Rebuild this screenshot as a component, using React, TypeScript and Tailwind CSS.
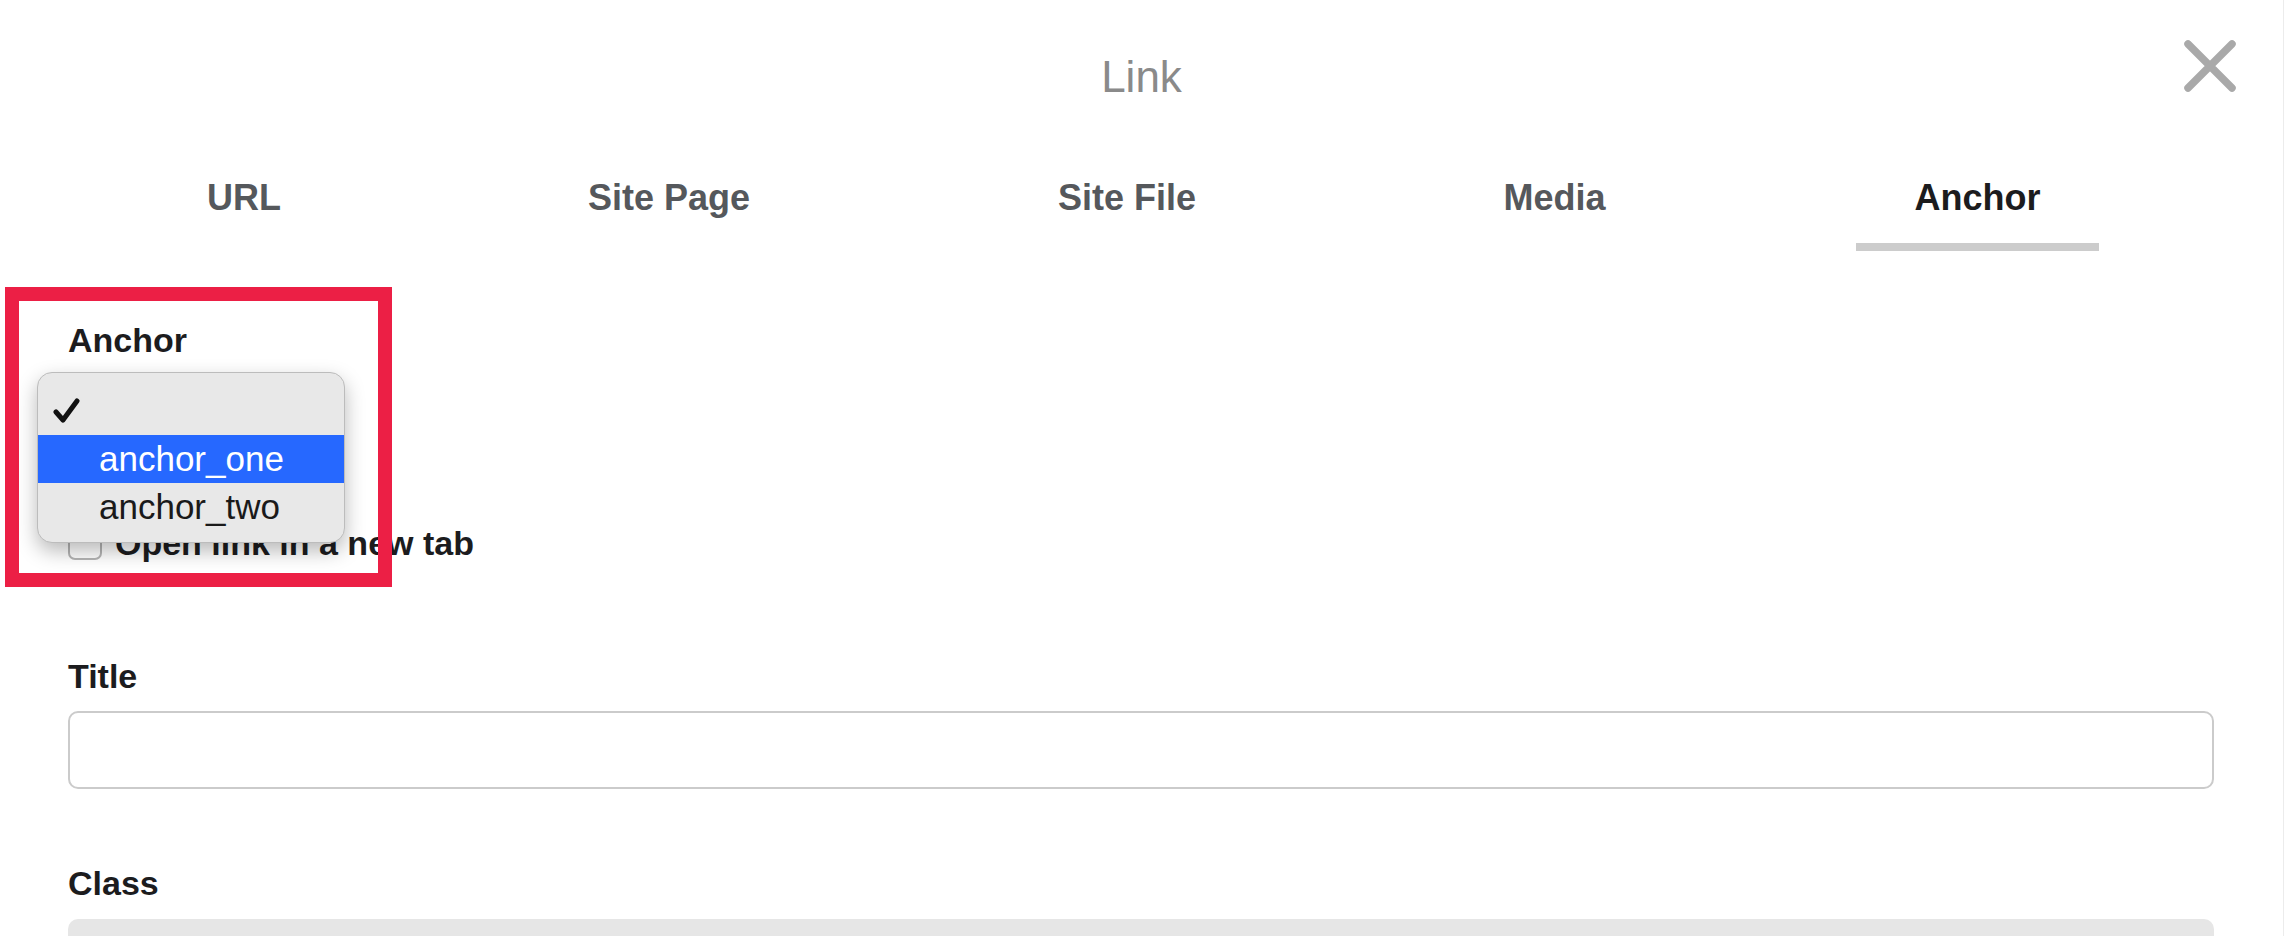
import React from 'react';

const tabs = [
    { label: 'URL', width: 'w-[186px]' },
    { label: 'Site Page', width: 'w-[278px]' },
    { label: 'Site File', width: 'w-[252px]' },
    { label: 'Media', width: 'w-[217px]' },
    { label: 'Anchor', width: 'w-[243px]', active: true },
];

const CloseIcon: React.FC = () => (
    <svg width="54" height="54" viewBox="0 0 54 54" fill="none">
        <path d="M5 5 L49 49 M49 5 L5 49" stroke="#a9a9a9" strokeWidth="7.5" strokeLinecap="round" />
    </svg>
);

const AnchorMenu: React.FC = () => (
    <div className="absolute left-[-31px] top-[15px] z-20 w-[308px] h-[171px] pt-[14px] rounded-[15px] bg-[#e8e8e8] border border-[#bcbcbc] shadow-[0_8px_20px_rgba(0,0,0,0.28)] text-[35px] leading-[48px] font-['Liberation_Sans',Arial,sans-serif]">
        <div className="h-[48px] flex items-center pl-[15px]">
            <svg width="28" height="26" viewBox="0 0 28 26" fill="none">
                <path d="M3 14 L10 22 L24 3" stroke="#111" strokeWidth="5" strokeLinecap="round" strokeLinejoin="round" />
            </svg>
        </div>
        <div className="h-[48px] pl-[61px] bg-[#2668ff] text-white">anchor_one</div>
        <div className="h-[48px] pl-[61px] text-[#1a1a1a]">anchor_two</div>
    </div>
);

export default function App() {
    return (
        <div className="relative w-[2284px] h-[936px] overflow-hidden bg-white border-r border-[#ececec] font-['Liberation_Sans',Arial,sans-serif]">
            {/* Header */}
            <div className="pt-[55px] text-center text-[44px] leading-[44px] text-[#8a8a8a]">Link</div>
            <button className="absolute right-[46px] top-[39px]">
                <CloseIcon />
            </button>

            {/* Tabs */}
            <div className="mt-[81px] flex pl-[151px] gap-[193px]">
                {tabs.map((t) => (
                    <div
                        key={t.label}
                        className={`${t.width} text-center text-[36px] leading-[36px] font-bold pb-[27px] border-b-[8px] ${
                            t.active ? 'border-[#cccccc] text-[#1c1c1e]' : 'border-transparent text-[#55585c]'
                        }`}
                    >
                        {t.label}
                    </div>
                ))}
            </div>

            {/* Form */}
            <div className="pl-[68px] pr-[69px] text-[#1c1c1e]">
                <div className="mt-[72px] h-[34px] text-[34px] leading-[34px] font-bold">Anchor</div>
                <div className="relative h-[169px]">
                    <AnchorMenu />
                </div>
                <div className="flex items-center gap-[13px] h-[34px]">
                    <div className="w-[34px] h-[34px] rounded-[7px] border-2 border-[#b5b5b5] bg-white" />
                    <span className="text-[34px] leading-[34px] font-bold">Open link in a new tab</span>
                </div>

                <div className="mt-[99px] h-[34px] text-[34px] leading-[34px] font-bold">Title</div>
                <div className="mt-[18px] h-[78px] rounded-[10px] border-2 border-[#cbcbcb] bg-white" />

                <div className="mt-[77px] h-[34px] text-[34px] leading-[34px] font-bold">Class</div>
                <div className="mt-[19px] h-[78px] rounded-[10px] bg-[#e6e6e6]" />
            </div>

            {/* Highlight annotation */}
            <div className="absolute left-[5px] top-[287px] z-10 w-[387px] h-[300px] border-[14px] border-[#ec1f45] pointer-events-none" />
        </div>
    );
}
